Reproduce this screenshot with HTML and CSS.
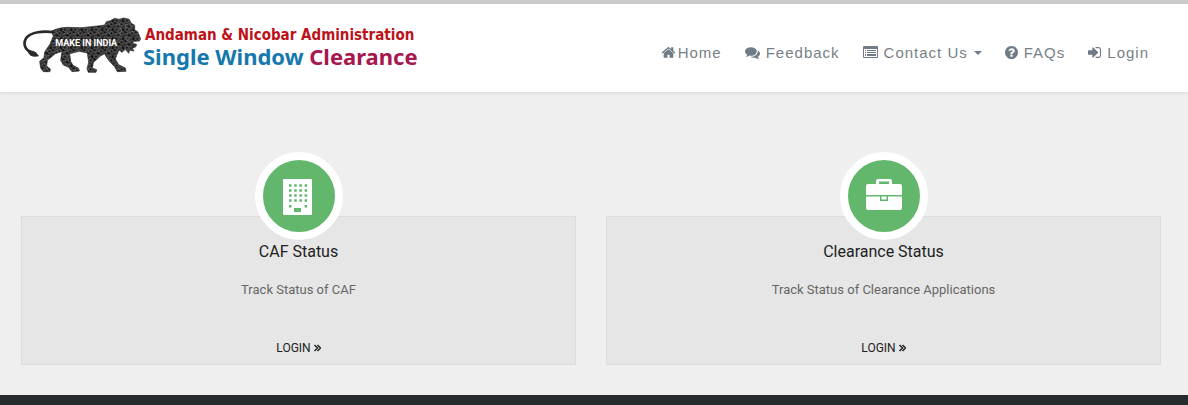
FILE: index.html
```html
<!DOCTYPE html>
<html lang="en">
<head>
    <meta charset="UTF-8">
    <meta name="viewport" content="width=device-width, initial-scale=1.0">
    <title>Single Window Clearance</title>
    <link rel="stylesheet" href="styles.css">
</head>
<body>
    <header class="header">
        <a class="brand" href="#">
            <svg class="lion" viewBox="69 51 354 168" role="img" aria-label="Make in India">
                <defs>
                    <!-- cog wheels on the body -->
                    <pattern id="gears" width="31" height="27" patternUnits="userSpaceOnUse">
                        <rect width="31" height="27" fill="#353232"/>
                        <circle cx="9" cy="8" r="6" fill="none" stroke="#858585" stroke-width="2" stroke-dasharray="4 2"/>
                        <circle cx="9" cy="8" r="2" fill="#080808"/>
                        <circle cx="24" cy="19" r="5" fill="#111" stroke="#777" stroke-width="2"/>
                        <path d="M18 3l8 4M3 22l9-3M15 14l4 8" stroke="#7b7b7b" stroke-width="2"/>
                        <path d="M26 5l4 7M13 24l7 1M2 14l5 3" stroke="#050505" stroke-width="4"/>
                    </pattern>
                </defs>
                <path d="M165 97C130 92 92 95 78 115C69 130 74 149 94 157" fill="none" stroke="#2b2929" stroke-width="8"/>
                <path d="M83 151Q96 150 107 156L117 168Q104 173 92 167L84 158Z" fill="#2b2929"/>
                <path fill="url(#gears)" stroke="#2b2929" stroke-width="2" d="M154 94Q172 83 200 82L245 83L300 77L314 75L319 65L331 62L344 55L357 58L371 54L388 58L393 69L404 76L404 90L413 95L422 117L418 123L403 124L396 130L410 133L407 141L397 144L402 153L389 151L386 160L376 148L366 157L357 150L350 166L346 177L356 194L376 204L378 214L352 215L344 200L328 184L313 161L300 169L280 188L277 204L290 209L288 217L265 217L261 206L266 187L262 159L238 154L209 161L212 184L219 196L236 205L238 213L216 215L206 202L190 195L182 181L186 154L166 161L142 181L140 198L151 207L150 215L130 215L122 204L119 184L132 173L134 156L150 132L160 108Z"/>
                <path d="M388 76L399 81M395 94L405 96M354 70L365 91L358 111M374 66L378 86M376 110L386 125" fill="none" stroke="#777" stroke-width="2"/>
                <text class="lion-text" x="166" y="138">MAKE IN INDIA</text>
            </svg>
            <span class="brand-text">
                <span class="brand-top">Andaman &amp; Nicobar Administration</span>
                <span class="brand-name">Single Window <span class="brand-accent">Clearance</span></span>
            </span>
        </a>
        <nav class="menu">
            <a class="menu-link menu-home" href="#">
                <svg class="icon" viewBox="0 0 1792 1792" aria-hidden="true"><path d="M1472 992v480q0 26-19 45t-45 19h-384v-384h-256v384h-384q-26 0-45-19t-19-45v-480q0-1 .5-3t.5-3l575-474 575 474q1 2 1 6zm223-69l-62 74q-8 9-21 11h-3q-13 0-21-7l-692-577-692 577q-12 8-24 7-13-2-21-11l-62-74q-8-10-7-23.5t11-21.5l719-599q32-26 76-26t76 26l244 204v-195q0-14 9-23t23-9h192q14 0 23 9t9 23v408l219 182q10 8 11 21.5t-7 23.5z"/></svg>
                Home
            </a>
            <a class="menu-link" href="#">
                <svg class="icon" viewBox="0 0 1792 1792" aria-hidden="true"><path d="M1408 768q0 139-94 257t-256.5 186.5-353.5 68.5q-86 0-176-16-124 88-278 128-36 9-86 16h-3q-11 0-20.5-8t-11.5-21q-1-3-1-6.5t.5-6.5 2-6l2.5-5 3.5-5.5 4-5 4.5-5 4-4.5q5-6 23-25t26-29.5 22.5-29 25-38.5 20.5-44q-124-72-195-177t-71-224q0-139 94-257t256.5-186.5 353.5-68.5 353.5 68.5 256.5 186.5 94 257zm384 256q0 120-71 224.5t-195 176.5q10 24 20.5 44t25 38.5 22.5 29 26 29.5 23 25q1 1 4 4.5t4.5 5 4 5 3.5 5.5l2.5 5 2 6 .5 6.5-1 6.5q-3 14-13 22t-22 7q-50-7-86-16-154-40-278-128-90 16-176 16-271 0-472-132 58 4 88 4 161 0 309-45t264-129q125-92 192-212t67-254q0-77-23-152 129 71 204 178t75 230z"/></svg>
                Feedback
            </a>
            <button class="menu-link" type="button" aria-haspopup="true">
                <svg class="icon" viewBox="0 0 15 15" aria-hidden="true"><path fill-rule="evenodd" d="M1 1h13a1 1 0 0 1 1 1v10a1 1 0 0 1-1 1H1a1 1 0 0 1-1-1V2a1 1 0 0 1 1-1zM1 4v8h13V4zM2 5h1v1H2zM4 5h9v1H4zM2 7h1v1H2zM4 7h9v1H4zM2 9h1v2H2zM4 9h9v2H4z"/></svg>
                Contact Us
                <span class="caret"></span>
            </button>
            <a class="menu-link" href="#">
                <svg class="icon icon-small" viewBox="128 128 1536 1536" aria-hidden="true"><path d="M1024 1376v-192q0-14-9-23t-23-9h-192q-14 0-23 9t-9 23v192q0 14 9 23t23 9h192q14 0 23-9t9-23zm256-672q0-88-55.5-163t-138.5-116-170-41q-243 0-371 213-15 24 8 42l132 100q7 6 19 6 16 0 25-12 53-68 86-92 34-24 86-24 48 0 85.5 26t37.5 59q0 38-20 61t-68 45q-63 28-115.5 86.5t-52.5 125.5v36q0 14 9 23t23 9h192q14 0 23-9t9-23q0-19 21.5-49.5t54.5-49.5q32-18 49-28.5t46-35 44.5-48 28-60.5 12.5-81zm384 192q0 209-103 385.5t-279.5 279.5-385.5 103-385.5-103-279.5-279.5-103-385.5 103-385.5 279.5-279.5 385.5-103 385.5 103 279.5 279.5 103 385.5z"/></svg>
                FAQs
            </a>
            <a class="menu-link" href="#">
                <svg class="icon icon-small" viewBox="128 128 1536 1536" aria-hidden="true"><path d="M1312 896q0 26-19 45l-544 544q-19 19-45 19t-45-19-19-45v-288h-448q-26 0-45-19t-19-45v-384q0-26 19-45t45-19h448v-288q0-26 19-45t45-19 45 19l544 544q19 19 19 45zm352-352v704q0 119-84.5 203.5t-203.5 84.5h-320q-13 0-22.5-9.5t-9.5-22.5q0-4-1-20t-.5-26.5 3-23.5 10-19.5 20.5-6.5h320q66 0 113-47t47-113v-704q0-66-47-113t-113-47h-312l-11.5-1-11.5-3-8-5.5-7-9-2-13.5q0-4-1-20t-.5-26.5 3-23.5 10-19.5 20.5-6.5h320q119 0 203.5 84.5t84.5 203.5z"/></svg>
                Login
            </a>
        </nav>
    </header>

    <main class="services">
        <section class="card">
            <div class="card-icon">
                <svg width="40" height="40" viewBox="0 0 40 40" aria-hidden="true">
                    <rect x="4" y="3" width="29" height="36" rx="1" fill="#fff"/>
                    <path d="M10 9.500H29M10 14.500H29M10 19.500H29M10 24.500H29" stroke="#62b76c" stroke-width="2.500" stroke-dasharray="2.500 2.700"/>
                    <path d="M10 29h2.500v2.500H10zM25.600 29h2.500v2.500h-2.500zM15 32h7v4h-7z" fill="#62b76c"/>
                </svg>
            </div>
            <h2 class="card-title">CAF Status</h2>
            <p class="card-text">Track Status of CAF</p>
            <a class="card-link" href="#">LOGIN
                <svg class="arrows" viewBox="0 0 7 8" aria-hidden="true"><path d="M.5 1l3 3-3 3M3.500 1l3 3-3 3"/></svg>
            </a>
        </section>
        <section class="card">
            <div class="card-icon">
                <svg width="40" height="40" viewBox="0 0 40 40" aria-hidden="true">
                    <path fill="#fff" fill-rule="evenodd" d="M12 8V5q0-2 2-2h12q2 0 2 2v3h8q2 0 2 2v9H2v-9q0-2 2-2zM15 5.500V8h10V5.500zM2 20.500h14V25h8v-4.500h14V32q0 2-2 2H4q-2 0-2-2zM17.500 20.500h5v3h-5z"/>
                </svg>
            </div>
            <h2 class="card-title">Clearance Status</h2>
            <p class="card-text">Track Status of Clearance Applications</p>
            <a class="card-link" href="#">LOGIN
                <svg class="arrows" viewBox="0 0 7 8" aria-hidden="true"><path d="M.5 1l3 3-3 3M3.500 1l3 3-3 3"/></svg>
            </a>
        </section>
    </main>

    <footer class="footer"></footer>
</body>
</html>
```
FILE: styles.css
```css
* {
    box-sizing: border-box;
}
body {
    display: flex;
    flex-direction: column;
    min-height: 100vh;
    margin: 0;
    background-color: #efefef;
    color: #222;
    font-family: Roboto, sans-serif;
}
a {
    color: inherit;
    text-decoration: none;
}

/* Header */
.header {
    display: flex;
    justify-content: space-between;
    align-items: center;
    padding: 10px 39px 15px 23px;
    border-top: 4px solid #cccac8;
    background-color: #fff;
    box-shadow: 0 1px 3px rgba(0, 0, 0, 0.1);
}
.brand {
    display: flex;
    align-items: center;
    padding: 3px 0 4px;
}
.lion {
    width: 118px;
    height: 56px;
}
.lion-text {
    fill: #fff;
    font-family: "Liberation Sans Narrow", Roboto, sans-serif;
    font-size: 27px;
    font-weight: bold;
}
.brand-text {
    display: flex;
    flex-direction: column;
    padding: 4px 0 0 2px;
    font-family: "DejaVu Sans Condensed", "DejaVu Sans", sans-serif;
    font-weight: bold;
    white-space: nowrap;
}
.brand-top {
    padding-left: 2px;
    color: #bd1218;
    font-size: 15px;
    line-height: 18px;
}
.brand-name {
    color: #1678ad;
    font-family: "Noto Sans", sans-serif;
    font-size: 22px;
    line-height: 24px;
}
.brand-accent {
    color: #a71850;
}
.menu {
    display: flex;
    align-items: center;
    gap: 23px;
    padding-top: 14px;
}
.menu-link {
    display: flex;
    align-items: center;
    gap: 6px;
    padding: 0;
    border: 0;
    background: none;
    color: #777f87;
    font-family: "Liberation Sans", Arial, sans-serif;
    font-size: 15px;
    line-height: 20px;
    letter-spacing: 1px;
    white-space: nowrap;
    cursor: pointer;
}
.menu-home {
    gap: 2px;
}
.icon {
    width: 15px;
    height: 15px;
    fill: #6f7b86;
}
.icon-small {
    width: 13px;
    height: 13px;
}
.caret {
    border-top: 4px solid #6f7b86;
    border-right: 4px solid transparent;
    border-left: 4px solid transparent;
}

/* Status boxes */
.services {
    display: grid;
    grid-template-columns: 1fr 1fr;
    gap: 30px;
    padding: 124px 27px 30px 21px;
}
.card {
    display: flex;
    flex-direction: column;
    align-items: center;
    padding-bottom: 6px;
    border: 1px solid #dcdcdc;
    background-color: #e6e6e6;
    text-align: center;
}
.card-icon {
    display: flex;
    justify-content: center;
    align-items: center;
    width: 88px;
    height: 88px;
    margin-top: -65px;
    border: 8px solid #fff;
    border-radius: 50%;
    background-color: #62b76c;
}
.card-title {
    margin: 0;
    font-size: 16px;
    font-weight: normal;
    line-height: 24px;
}
.card-text {
    margin: 16px 0 38px;
    color: #666;
    font-size: 13px;
    line-height: 20px;
}
.card-link {
    display: flex;
    align-items: center;
    gap: 3px;
    font-size: 12px;
    line-height: 20px;
}
.arrows {
    width: 7px;
    height: 8px;
    fill: none;
    stroke: #222;
    stroke-width: 1.5;
}

/* Footer */
.footer {
    flex: 1;
    min-height: 10px;
    background-color: #262b2e;
}
```
